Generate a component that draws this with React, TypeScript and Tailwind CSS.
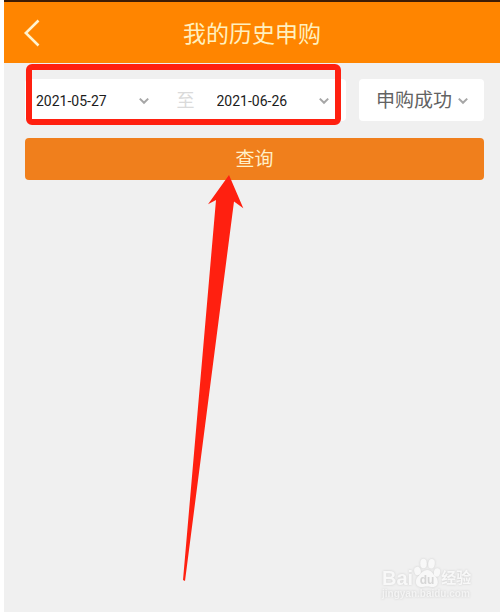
import React, { useState } from 'react';
import { cx } from 'class-variance-authority';

interface PickerProps {
  label: string;
  value: string;
  options: string[];
  onChange: (value: string) => void;
  className?: string;
  selectClassName?: string;
}

const Chevron: React.FC = () => (
  <svg
    className="pointer-events-none h-2 w-3 shrink-0"
    viewBox="0 0 12 8"
    fill="none"
    stroke="#a6a6a6"
    strokeWidth="2"
    aria-hidden="true"
  >
    <path d="M1.800 1.600 6 5.800l4.200-4.200" />
  </svg>
);

const Picker: React.FC<PickerProps> = ({ label, value, options, onChange, className, selectClassName }) => (
  <label className={cx('flex items-center', className)}>
    <select
      aria-label={label}
      value={value}
      onChange={(e) => onChange(e.target.value)}
      className={cx('cursor-pointer appearance-none bg-transparent outline-none', selectClassName)}
    >
      {options.map((option) => (
        <option key={option} value={option}>
          {option}
        </option>
      ))}
    </select>
    <Chevron />
  </label>
);

const Watermark: React.FC = () => (
  <div className="absolute right-7 bottom-3 w-[90px] text-[#f8f8f8] [filter:drop-shadow(0_0_1px_#cdcdcd)]">
    <div className="flex items-end">
      <span className="font-[Liberation_Sans,sans-serif] text-xl leading-5 font-bold">Bai</span>
      <span className="relative h-8 w-7 shrink-0">
        <svg className="h-full w-full" viewBox="0 0 28 32" fill="currentColor" aria-hidden="true">
          <ellipse cx="4.500" cy="15" rx="3.300" ry="4.200" transform="rotate(-12 4.500 15)" />
          <ellipse cx="10.500" cy="7.500" rx="3.300" ry="4.800" />
          <ellipse cx="18.500" cy="7.800" rx="3.300" ry="4.800" transform="rotate(8 18.500 7.800)" />
          <ellipse cx="24" cy="16.500" rx="3.200" ry="4.200" transform="rotate(10 24 16.500)" />
          <path d="M14.500 14c4 0 5.200 4 8 6.500 3 2.800 3.800 10-2 10.500-2.500.200-4-.500-6.500-.500s-4 .700-6.500.500c-6-.500-5.500-7.700-2.500-10.500 2.800-2.500 4.500-6.500 9.500-6.500Z" />
        </svg>
        <span className="absolute inset-x-0 bottom-0 text-center font-[Liberation_Sans,sans-serif] text-xs leading-4 font-bold text-[#d6d6d6]">
          du
        </span>
      </span>
      <span className="text-[15px] leading-5 font-bold whitespace-nowrap">经验</span>
    </div>
    <div className="font-[Liberation_Sans,sans-serif] text-[10px] leading-3 font-bold text-[#f4f4f4]">jingyan.baidu.com</div>
  </div>
);

const App: React.FC = () => {
  const [from, setFrom] = useState('2021-05-27');
  const [to, setTo] = useState('2021-06-26');
  const [status, setStatus] = useState('申购成功');

  return (
    <div className="min-h-screen bg-white pl-1 font-[Roboto,Noto_Sans_CJK_SC,sans-serif]">
      <div className="relative min-h-screen bg-[#f0f0f0]">
        <header className="grid h-[63px] grid-cols-[56px_1fr_56px] items-center border-t-2 border-[#3d1c05] bg-[#ff8500]">
          <button type="button" aria-label="返回" className="flex h-full items-center pl-5">
            <svg className="h-7 w-4" viewBox="0 0 16 28" fill="none" stroke="#fff3cf" strokeWidth="2.600" aria-hidden="true">
              <path d="M14.500 1.500 1.800 14l12.700 12.500" />
            </svg>
          </button>
          <h1 className="pt-1 text-center text-[23px] leading-8 text-[#fff0bf]">我的历史申购</h1>
        </header>

        <main className="py-4 pr-4 pl-[21px]">
          <div className="flex gap-[13px]">
            <div className="relative flex h-[42px] flex-1 items-center rounded bg-white pt-0.5 pr-4 pl-[11px]">
              <Picker
                label="开始日期"
                value={from}
                options={['2021-05-27', '2021-06-26']}
                onChange={setFrom}
                className="flex-1"
                selectClassName="flex-1 text-sm text-[#1c1c1c]"
              />
              <span className="pr-[22px] pl-[27px] text-lg text-[#dadada]">至</span>
              <Picker
                label="结束日期"
                value={to}
                options={['2021-05-27', '2021-06-26']}
                onChange={setTo}
                className="flex-1"
                selectClassName="flex-1 text-sm text-[#1c1c1c]"
              />
              {/* red frame round the date range */}
              <div className="pointer-events-none absolute -top-[15px] right-[5px] -bottom-1 left-px rounded-md border-[6px] border-[#ff2010]" />
            </div>

            <Picker
              label="申购状态"
              value={status}
              options={['申购成功', '申购失败']}
              onChange={setStatus}
              className="h-[42px] w-[125px] justify-center gap-1 rounded bg-white pt-0.5 pl-0.5"
              selectClassName="text-[19px] leading-7 text-[#626262]"
            />
          </div>

          <button type="button" className="mt-[17px] h-[42px] w-full rounded bg-[#f07f1c] pt-0.5 text-[19px] leading-7 text-[#fff0c8]">
            查询
          </button>
        </main>

        {/* arrow pointing at the query button */}
        <svg
          className="pointer-events-none absolute top-[175px] left-[179px] h-[407px] w-[62px]"
          viewBox="183 175 62 407"
          aria-hidden="true"
        >
          <path d="M229 175 243.300 208.300 234 201.500 185 581 183 580 216 200 208 204.300Z" fill="#ff2010" />
        </svg>

        <Watermark />
      </div>
    </div>
  );
};

export default App;
